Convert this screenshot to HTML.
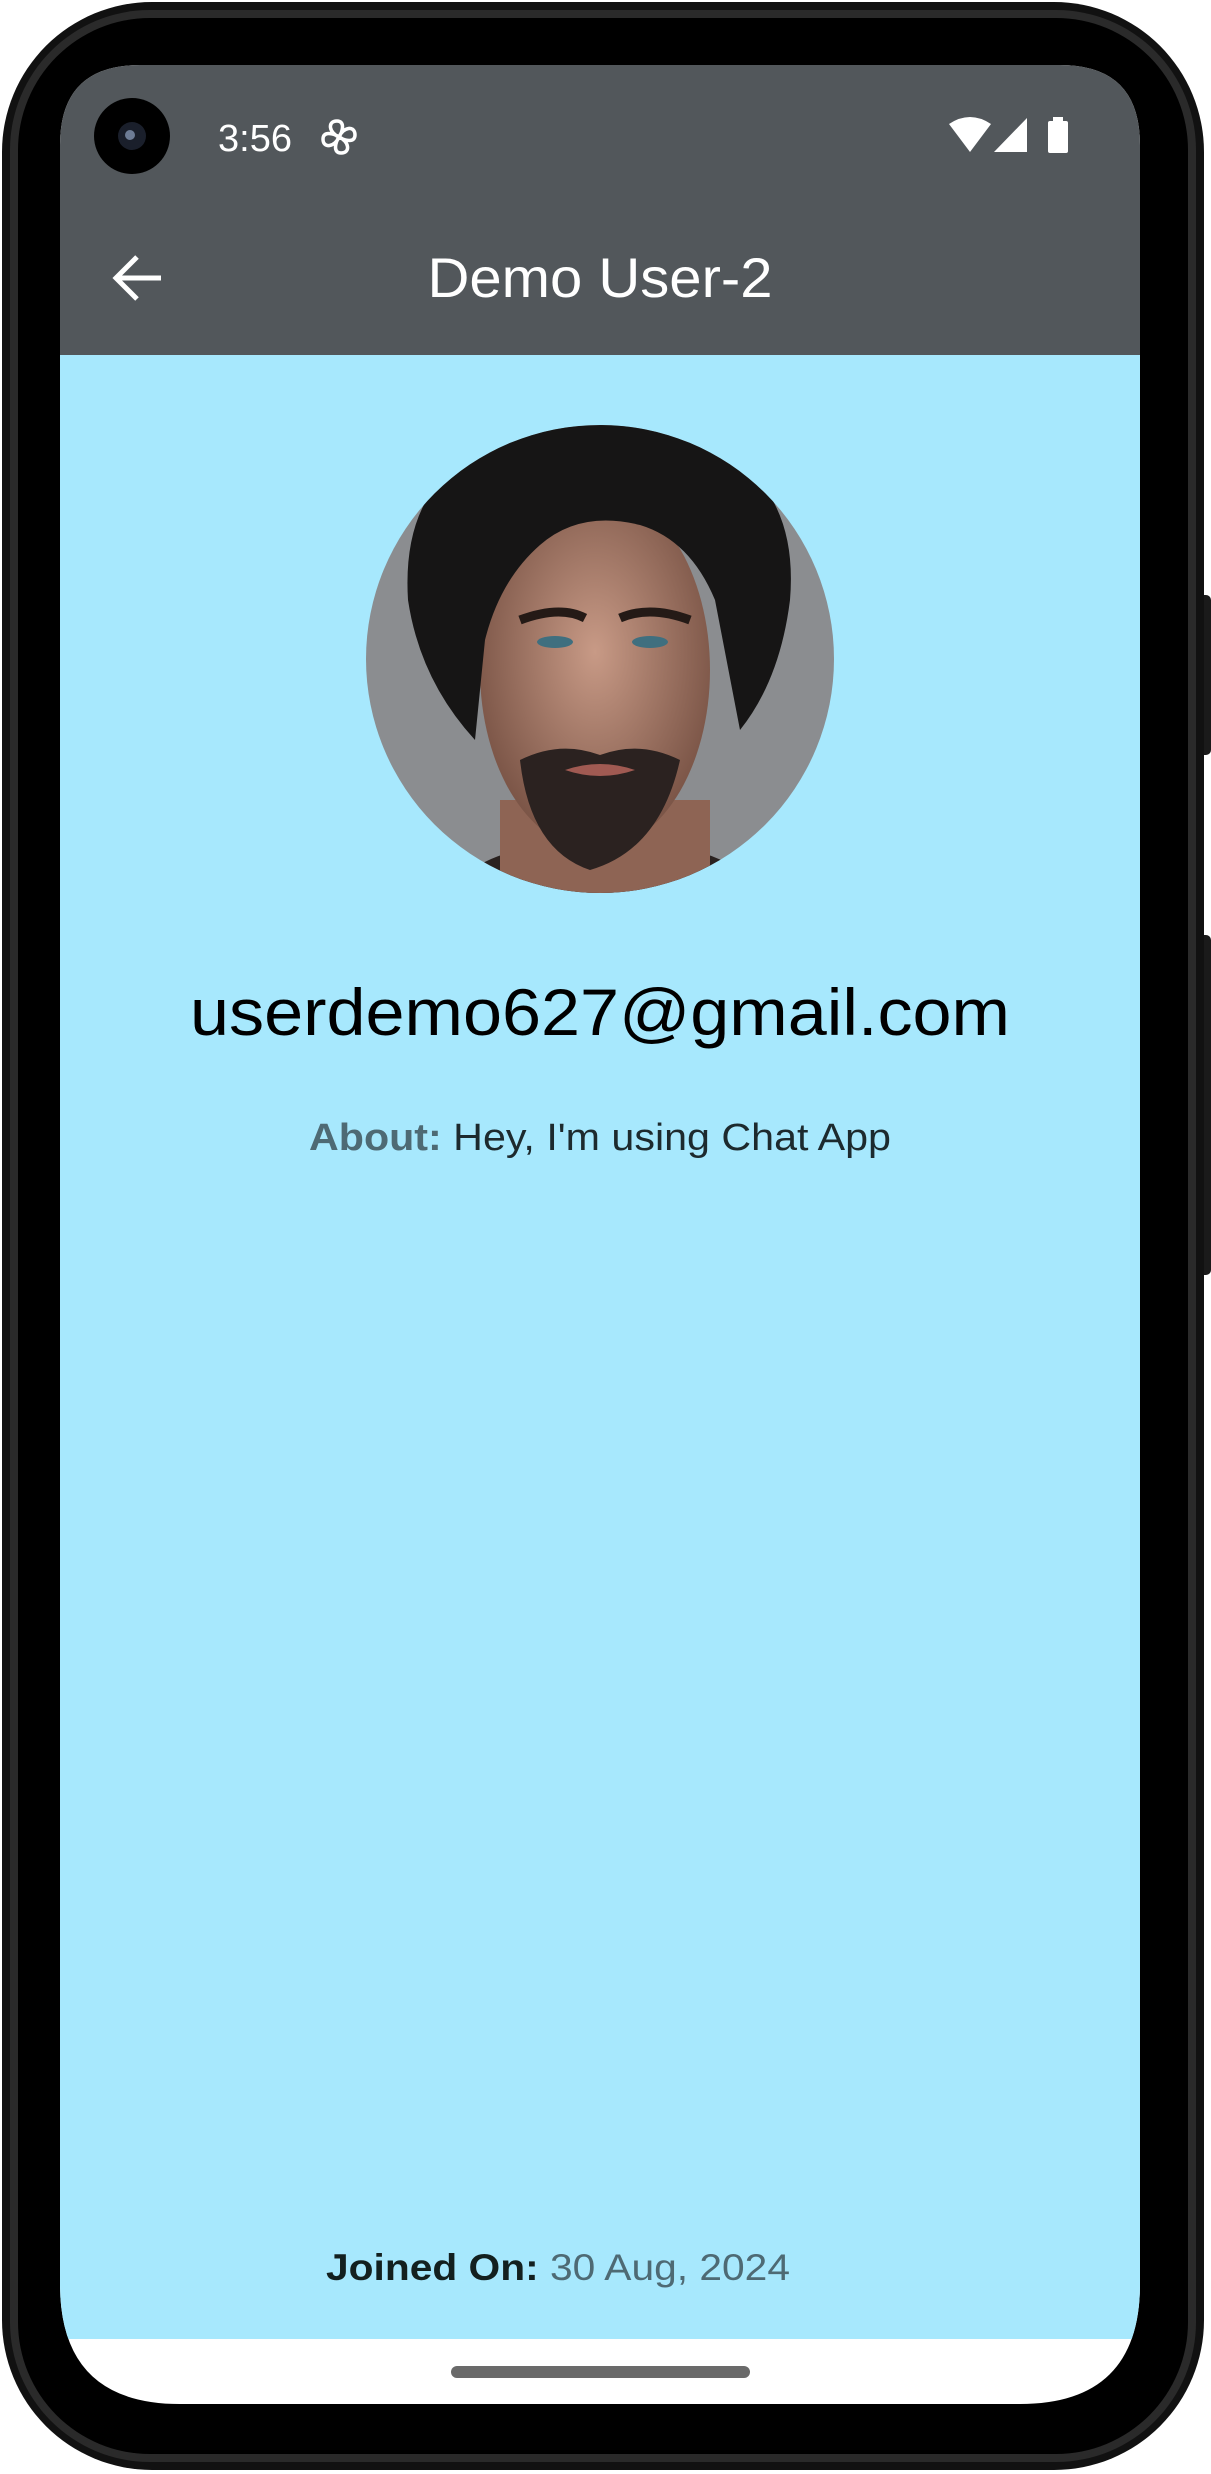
<!DOCTYPE html>
<html><head><meta charset="utf-8"><style>
html,body{margin:0;padding:0;background:#fff;width:1211px;height:2474px;overflow:hidden}
svg{display:block}
text{font-family:"Liberation Sans",Roboto,sans-serif}
</style></head><body>
<svg width="1211" height="2474" viewBox="0 0 1211 2474" xmlns="http://www.w3.org/2000/svg">
<defs>
<clipPath id="scr"><path d="M140 65 H1060 Q1140 65 1140 145 V2284 Q1140 2404 1020 2404 H180 Q60 2404 60 2284 V145 Q60 65 140 65 Z"/></clipPath>
<clipPath id="av"><circle cx="600" cy="659" r="234"/></clipPath>
<radialGradient id="face" cx="50%" cy="45%" r="55%"><stop offset="0" stop-color="#c89a86"/><stop offset="1" stop-color="#7a5446"/></radialGradient>
</defs>
<rect x="1198" y="595" width="13" height="160" rx="5" fill="#1a1a1a"/>
<rect x="1198" y="935" width="13" height="340" rx="5" fill="#1a1a1a"/>
<rect x="2" y="2" width="1202" height="2468" rx="150" fill="#111"/>
<rect x="10" y="10" width="1186" height="2452" rx="140" fill="#2a2a2a"/>
<rect x="18" y="18" width="1170" height="2436" rx="132" fill="#000"/>
<g clip-path="url(#scr)">
<rect x="60" y="65" width="1080" height="2339" fill="#fff"/>
<rect x="60" y="65" width="1080" height="290" fill="#52575b"/>
<rect x="60" y="355" width="1080" height="1984" fill="#a7e8fd"/>
</g>
<circle cx="132" cy="136" r="38" fill="#000"/>
<circle cx="132" cy="136" r="14" fill="#1a1f2b"/>
<circle cx="130" cy="135" r="5" fill="#6d7c95"/>
<text x="218" y="151" font-size="38" fill="#fff">3:56</text>
<g stroke="#fff" stroke-width="3.5" fill="none" transform="translate(339,137)">
<path d="M0 0 C-10 -4 -12 -16 -2 -16 C6 -16 4 -6 0 0 C4 -10 16 -12 16 -2 C16 6 6 4 0 0 C10 4 12 16 2 16 C-6 16 -4 6 0 0 C-4 10 -16 12 -16 2 C-16 -6 -6 -4 0 0Z"/>
</g>
<path d="M949 124 Q970 110 991 124 L970 152 Z" fill="#fff"/>
<path d="M994 152 L1027 118 V152 Z" fill="#fff"/>
<rect x="1048" y="121" width="20" height="32" rx="2" fill="#fff"/>
<rect x="1053" y="117" width="10" height="5" fill="#fff"/>
<path d="M161 278 H117 M137 257 L116 278 L137 299" stroke="#fff" stroke-width="5" fill="none"/>
<text x="600" y="297" font-size="56" fill="#fff" text-anchor="middle" textLength="345" lengthAdjust="spacingAndGlyphs">Demo User-2</text>
<g clip-path="url(#av)">
<rect x="360" y="420" width="480" height="480" fill="#8b8d90"/>
<path d="M440 900 Q470 860 520 850 L690 850 Q740 860 770 900 Z" fill="#2a2220"/>
<path d="M500 800 L500 900 L710 900 L710 800 Z" fill="#8e6454"/>
<ellipse cx="595" cy="670" rx="115" ry="180" fill="url(#face)"/>
<path d="M520 760 Q530 850 590 870 Q660 850 680 760 Q640 740 600 755 Q560 740 520 760Z" fill="#2b2220"/>
<path d="M565 770 Q600 758 635 770 Q600 782 565 770Z" fill="#a05a52"/>
<path d="M408 600 Q400 470 510 440 Q600 410 700 440 Q800 480 790 600 Q780 680 740 730 L715 600 Q690 540 640 525 Q580 510 540 545 Q500 580 485 640 L475 740 Q420 680 408 600Z" fill="#161515"/>
<path d="M520 620 Q560 605 585 618 M620 618 Q650 605 690 620" stroke="#241a16" stroke-width="9" fill="none"/>
<ellipse cx="555" cy="642" rx="18" ry="6" fill="#3f6f7f"/>
<ellipse cx="650" cy="642" rx="18" ry="6" fill="#3f6f7f"/>
</g>
<text x="600" y="1035" font-size="66" fill="#000" text-anchor="middle" textLength="820" lengthAdjust="spacingAndGlyphs">userdemo627@gmail.com</text>
<text x="309" y="1150" font-size="38" textLength="582" lengthAdjust="spacingAndGlyphs"><tspan fill="#4e6a74" font-weight="bold">About:</tspan><tspan fill="#1d2a2e"> Hey, I'm using Chat App</tspan></text>
<text x="326" y="2280" font-size="37" textLength="464" lengthAdjust="spacingAndGlyphs"><tspan fill="#13201f" font-weight="bold">Joined On:</tspan><tspan fill="#4e6a74"> 30 Aug, 2024</tspan></text>
<rect x="451" y="2366" width="299" height="12" rx="6" fill="#6a6a6a"/>
</svg>
</body></html>
